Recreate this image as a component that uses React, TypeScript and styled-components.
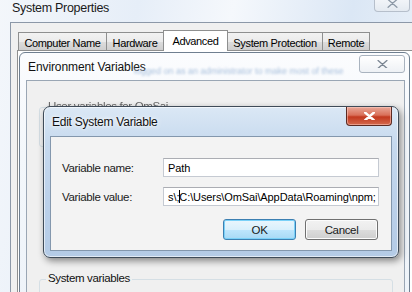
import React from "react";
import styled, { createGlobalStyle } from "styled-components";

const Global = createGlobalStyle`
  html, body { margin: 0; padding: 0; }
  body { width: 412px; height: 292px; overflow: hidden; background: #dfe7f1; }
  * { box-sizing: border-box; }
`;

const FONT = `"Liberation Sans", "Noto Sans", Arial, sans-serif`;

const Desktop = styled.div`
  position: relative;
  width: 412px;
  height: 292px;
  overflow: hidden;
  font-family: ${FONT};
  font-size: 11px;
  letter-spacing: -0.35px;
  color: #000;
  background: linear-gradient(180deg, #eef3f9 0%, #e3ebf5 100%);
`;

/* ---------- System Properties ---------- */
const SysWindow = styled.div`
  position: absolute;
  left: -4px;
  top: -8px;
  width: 424px;
  height: 310px;
  display: flex;
  flex-direction: column;
  padding: 0 0 0 13px;
  background: linear-gradient(100deg, #f4f7fb 0%, #e6eef8 30%, #f5f8fc 50%, #dbe7f5 75%, #eef3f9 100%);
  border-left: 1px solid #b9c4d2;
`;

const SysTitleBar = styled.div`
  flex: 0 0 30px;
  display: flex;
  align-items: center;
  padding: 2px 0 0 2px;
  position: relative;
`;

const SysTitle = styled.span`
  font-size: 12.5px;
  letter-spacing: -0.3px;
  color: #1a1a1a;
`;

const GhostClose = styled.div`
  position: absolute;
  right: 10px;
  top: 4px;
  width: 36px;
  height: 16px;
  border: 1px solid #b6bfcb;
  border-top: none;
  border-radius: 0 0 4px 4px;
  background: linear-gradient(180deg, #f6f8fb, #e4eaf1);
  display: flex;
  align-items: center;
  justify-content: center;
`;

const SysBody = styled.div`
  flex: 1;
  background: #f0f0f0;
  border-top: 1px solid #8c98a8;
  border-left: 1px solid #8c98a8;
  padding: 7px 0 0 6px;
  display: flex;
  flex-direction: column;
`;

const TabStrip = styled.div`
  flex: 0 0 21px;
  display: flex;
  align-items: flex-end;
  padding-left: 2px;
`;

const Tab = styled.div<{ $active?: boolean; $w: number }>`
  width: ${(p) => p.$w}px;
  height: ${(p) => (p.$active ? 21 : 19)}px;
  display: flex;
  align-items: center;
  justify-content: center;
  padding-top: ${(p) => (p.$active ? 0 : 2)}px;
  border: 1px solid #8e8f8f;
  border-bottom: ${(p) => (p.$active ? "none" : "1px solid #8e8f8f")};
  margin-left: -1px;
  background: ${(p) =>
    p.$active ? "#ffffff" : "linear-gradient(180deg, #f2f2f2 0%, #ebebeb 50%, #dddddd 51%, #cfcfcf 100%)"};
  white-space: nowrap;
  position: relative;
  z-index: ${(p) => (p.$active ? 1 : 0)};
`;

const TabPanel = styled.div`
  flex: 1;
  border: 1px solid #8e8f8f;
  background: #ffffff;
  margin-top: -1px;
`;

/* ---------- Environment Variables ---------- */
const EnvWindow = styled.div`
  position: absolute;
  left: 19px;
  top: 52px;
  width: 391px;
  height: 260px;
  border: 1px solid #6f7f90;
  border-radius: 6px 6px 0 0;
  background: linear-gradient(180deg, #fbfcfe 0%, #f3f7fb 40%, #eef3f9 100%);
  display: flex;
  flex-direction: column;
  padding: 0 4px 0 6px;
`;

const EnvTitleBar = styled.div`
  flex: 0 0 27px;
  display: flex;
  align-items: center;
  padding: 1px 0 0 2px;
  position: relative;
`;

const EnvTitle = styled.span`
  font-size: 12px;
  letter-spacing: -0.1px;
  color: #111;
`;

const FaintText = styled.span`
  position: absolute;
  left: 108px;
  top: 13px;
  font-size: 9px;
  letter-spacing: 0;
  color: #a9c0dd;
  filter: blur(0.9px);
  white-space: nowrap;
`;

const EnvClose = styled.div`
  position: absolute;
  right: 0px;
  top: 2px;
  width: 46px;
  height: 18px;
  border: 1px solid #a9b3bf;
  border-radius: 3px;
  background: linear-gradient(180deg, #ffffff, #eef1f5);
  display: flex;
  align-items: center;
  justify-content: center;
`;

const EnvContent = styled.div`
  flex: 1;
  background: #f0f0f0;
  border: 1px solid #9aa6b4;
  padding: 26px 11px 0 12px;
  display: flex;
  flex-direction: column;
  gap: 132px;
`;

const GroupBox = styled.div`
  flex: 0 0 40px;
  position: relative;
  border: 1px solid #d5dfe5;
  border-radius: 3px;
  background: #f0f0f0;
`;

const GroupLabel = styled.span<{ $faint?: boolean }>`
  position: absolute;
  left: 6px;
  top: -8px;
  padding: 0 2px;
  background: #f0f0f0;
  font-size: 11.5px;
  color: ${(p) => (p.$faint ? "#666" : "#111")};
  filter: ${(p) => (p.$faint ? "blur(0.6px)" : "none")};
`;

/* ---------- Edit System Variable ---------- */
const Dialog = styled.div`
  position: absolute;
  left: 43px;
  top: 106px;
  width: 356px;
  height: 152px;
  border: 1px solid #3f4b58;
  border-radius: 7px;
  background: linear-gradient(180deg, #dbe8f5 0%, #c6d9ee 25%, #bcd1ea 60%, #b4cbe6 100%);
  box-shadow: 2px 3px 7px rgba(0, 0, 0, 0.45), inset 0 0 0 1px rgba(255, 255, 255, 0.6);
  padding: 0 6px 6px 6px;
  display: flex;
  flex-direction: column;
`;

const DialogTitleBar = styled.div`
  flex: 0 0 29px;
  display: flex;
  align-items: center;
  padding-left: 2px;
  position: relative;
`;

const DialogTitle = styled.span`
  font-size: 12px;
  letter-spacing: -0.25px;
  color: #111;
  text-shadow: 0 0 6px #fff, 0 0 3px #fff;
`;

const RedClose = styled.div`
  position: absolute;
  right: 0px;
  top: 0px;
  width: 46px;
  height: 19px;
  border: 1px solid #5b2a22;
  border-top: none;
  border-radius: 0 0 4px 4px;
  background: linear-gradient(180deg, #e9a898 0%, #d9705a 45%, #c2391f 55%, #d46a4e 100%);
  display: flex;
  align-items: center;
  justify-content: center;
  box-shadow: inset 0 0 0 1px rgba(255, 210, 200, 0.5);
`;

const DialogPanel = styled.div`
  flex: 1;
  background: #f3f3f3;
  border: 1px solid #8397ad;
  padding: 21px 12px 0 11px;
  display: flex;
  flex-direction: column;
`;

const FieldRow = styled.div`
  display: flex;
  align-items: center;
  height: 19px;
  margin-bottom: 10px;
`;

const FieldLabel = styled.label`
  width: 102px;
  font-size: 11.5px;
  color: #1a1a1a;
`;

const TextBox = styled.div`
  width: 218px;
  height: 19px;
  border: 1px solid #c5cad2;
  border-top-color: #abadb3;
  background: #fff;
  display: flex;
  align-items: center;
  padding-left: 4px;
  font-size: 11px;
  letter-spacing: -0.1px;
  white-space: nowrap;
  overflow: hidden;
`;

const Caret = styled.span`
  display: inline-block;
  width: 1px;
  height: 13px;
  background: #000;
  margin: 0 -1px 0 0;
`;

const ButtonRow = styled.div`
  display: flex;
  justify-content: flex-end;
  gap: 9px;
  margin-top: 3px;
  padding-right: 1px;
`;

const Button = styled.div<{ $default?: boolean }>`
  width: 73px;
  height: 21px;
  border-radius: 3px;
  border: 1px solid ${(p) => (p.$default ? "#3c7fb1" : "#707070")};
  background: ${(p) =>
    p.$default
      ? "linear-gradient(180deg, #eaf6fd 0%, #d9f0fc 50%, #bee6fd 51%, #a7d9f5 100%)"
      : "linear-gradient(180deg, #f2f2f2 0%, #ebebeb 50%, #dddddd 51%, #cfcfcf 100%)"};
  box-shadow: inset 0 0 0 1px ${(p) => (p.$default ? "#7ad1f8" : "#fcfcfc")};
  display: flex;
  align-items: center;
  justify-content: center;
  font-size: 11.5px;
  color: #1a1a1a;
`;

const XIcon = ({ color, size = 10, weight = 2 }: { color: string; size?: number; weight?: number }) => (
  <svg width={size} height={size * 0.8} viewBox="0 0 10 8">
    <path d="M1 0.5 L9 7.5 M9 0.5 L1 7.5" stroke={color} strokeWidth={weight} strokeLinecap="round" />
  </svg>
);

export default function App() {
  return (
    <>
      <Global />
      <Desktop>
        <SysWindow>
          <SysTitleBar>
            <SysTitle>System Properties</SysTitle>
            <GhostClose>
              <XIcon color="#8d99a7" size={11} weight={1.2} />
            </GhostClose>
          </SysTitleBar>
          <SysBody>
            <TabStrip>
              <Tab $w={89}>Computer Name</Tab>
              <Tab $w={58}>Hardware</Tab>
              <Tab $w={65} $active>Advanced</Tab>
              <Tab $w={96}>System Protection</Tab>
              <Tab $w={48}>Remote</Tab>
            </TabStrip>
            <TabPanel />
          </SysBody>
        </SysWindow>

        <EnvWindow>
          <EnvTitleBar>
            <EnvTitle>Environment Variables</EnvTitle>
            <FaintText>logged on as an administrator to make most of these</FaintText>
            <EnvClose>
              <XIcon color="#7a8592" size={11} weight={1.2} />
            </EnvClose>
          </EnvTitleBar>
          <EnvContent>
            <GroupBox>
              <GroupLabel $faint>User variables for OmSai</GroupLabel>
            </GroupBox>
            <GroupBox>
              <GroupLabel>System variables</GroupLabel>
            </GroupBox>
          </EnvContent>
        </EnvWindow>

        <Dialog>
          <DialogTitleBar>
            <DialogTitle>Edit System Variable</DialogTitle>
            <RedClose>
              <XIcon color="#ffffff" size={11} weight={2.2} />
            </RedClose>
          </DialogTitleBar>
          <DialogPanel>
            <FieldRow>
              <FieldLabel>Variable name:</FieldLabel>
              <TextBox>Path</TextBox>
            </FieldRow>
            <FieldRow>
              <FieldLabel>Variable value:</FieldLabel>
              <TextBox>
                s\;
                <Caret />
                C:\Users\OmSai\AppData\Roaming\npm;
              </TextBox>
            </FieldRow>
            <ButtonRow>
              <Button $default>OK</Button>
              <Button>Cancel</Button>
            </ButtonRow>
          </DialogPanel>
        </Dialog>
      </Desktop>
    </>
  );
}
